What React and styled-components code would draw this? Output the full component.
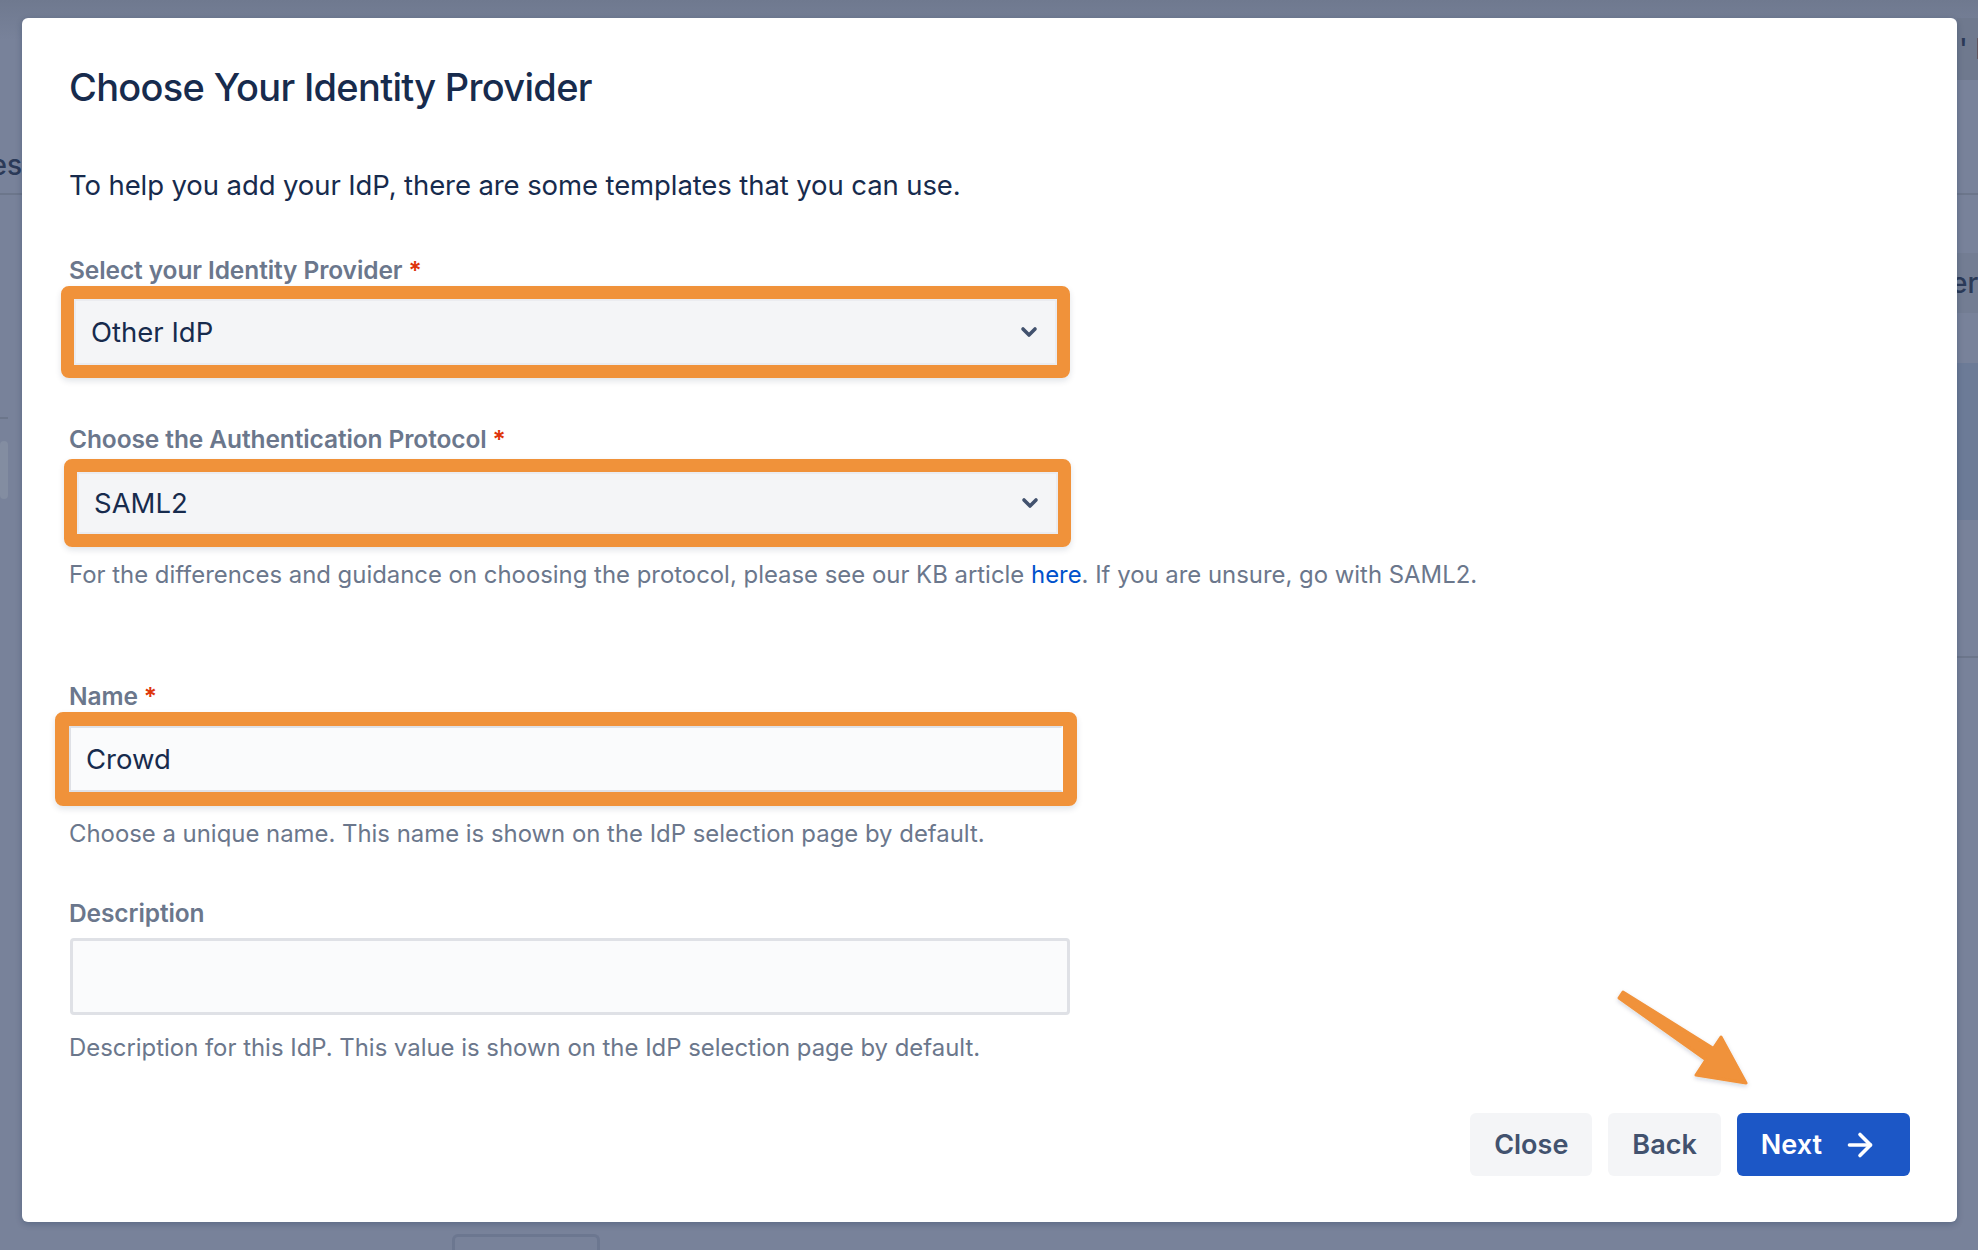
import React from 'react';
import styled, { createGlobalStyle } from 'styled-components';
import { ArrowRight } from 'lucide-react';

const GlobalStyle = createGlobalStyle`
  html, body {
    margin: 0;
    padding: 0;
    background: #78829a;
    font-family: Inter, "Noto Sans", "Liberation Sans", sans-serif;
  }
  * { box-sizing: border-box; }
`;

const Page = styled.div`
  width: 1978px;
  height: 1250px;
  overflow: hidden;
  background: linear-gradient(#6f798f 0, #78829a 40px, #78829a 100%);
  display: flex;
  flex-direction: column;
  padding-top: 18px;
`;

const MiddleRow = styled.div`
  display: flex;
  height: 1204px;
`;

const SideStrip = styled.div`
  width: ${(p) => p.$width}px;
  flex-shrink: 0;
  display: flex;
  flex-direction: column;
  overflow: hidden;
`;

const GhostBlock = styled.div`
  height: ${(p) => p.$h}px;
  margin-top: ${(p) => p.$mt || 0}px;
  background: ${(p) => p.$bg || 'transparent'};
  border-bottom: ${(p) => (p.$line ? '2px solid #6c768b' : 'none')};
  border-radius: ${(p) => p.$radius || 0}px;
  width: ${(p) => p.$w || '100%'};
  color: #2b3a58;
  font-size: 28px;
  line-height: 36px;
  font-weight: 500;
  white-space: nowrap;
  display: flex;
  align-items: ${(p) => (p.$bottom ? 'flex-end' : 'center')};
  justify-content: ${(p) => (p.$end ? 'flex-end' : 'flex-start')};
  padding-left: ${(p) => p.$pl || 0}px;
  padding-bottom: ${(p) => p.$pb || 0}px;
  text-indent: ${(p) => p.$indent || 0}px;
  flex-shrink: 0;
`;

const BottomStrip = styled.div`
  height: 28px;
  display: flex;
  align-items: flex-end;
  padding-left: 452px;
`;

const GhostButton = styled.div`
  width: 148px;
  height: 16px;
  border: 3px solid #6c7790;
  border-bottom: none;
  border-radius: 6px 6px 0 0;
`;

const Modal = styled.div`
  position: relative;
  width: 1935px;
  flex-shrink: 0;
  background: #ffffff;
  border-radius: 6px;
  box-shadow: 0 2px 6px rgba(9, 30, 66, 0.25);
  padding: 45px 47px 46px 47px;
  display: flex;
  flex-direction: column;
`;

const Title = styled.h1`
  margin: 0;
  font-size: 38px;
  line-height: 48px;
  font-weight: 500;
  letter-spacing: -0.7px;
  color: #172b4d;
`;

const Intro = styled.p`
  margin: 54px 0 0 0;
  font-size: 27.5px;
  line-height: 40px;
  color: #172b4d;
  letter-spacing: -0.1px;
`;

const Label = styled.div`
  margin-top: ${(p) => p.$mt}px;
  font-size: 24.5px;
  line-height: 32px;
  font-weight: 600;
  color: #6b778c;
  letter-spacing: -0.1px;
`;

const Required = styled.span`
  color: #de350b;
  margin-left: 6px;
`;

const Highlight = styled.div`
  margin-left: ${(p) => p.$ml}px;
  width: ${(p) => p.$w}px;
  margin-top: ${(p) => p.$mt || 0}px;
  border: ${(p) => p.$bw}px solid #f0923a;
  border-radius: 8px;
  box-shadow: 0 3px 6px rgba(9, 30, 66, 0.12);
`;

const FieldBox = styled.div`
  height: ${(p) => p.$h}px;
  background: ${(p) => (p.$select ? '#f4f5f7' : '#fafbfc')};
  border: 2px solid ${(p) => (p.$select ? '#ebecf0' : '#dfe1e6')};
  border-right-color: ${(p) => (p.$select ? '#ebecf0' : 'transparent')};
  display: flex;
  align-items: center;
  justify-content: space-between;
  padding: 0 17px 0 ${(p) => p.$pl}px;
  font-size: 27.5px;
  color: #172b4d;
`;

const Chevron = styled.svg`
  width: 18px;
  height: 12px;
  color: #42526e;
`;

const Help = styled.div`
  margin-top: ${(p) => p.$mt}px;
  font-size: 23.9px;
  line-height: 36px;
  color: #6b778c;
`;

const Link = styled.a`
  color: #0052cc;
  text-decoration: none;
`;

const TextArea = styled.div`
  margin-top: 9px;
  margin-left: 1px;
  width: 1000px;
  height: 78px;
  border: 3px solid #dfe1e6;
  border-radius: 4px;
  background: #fafbfc;
`;

const Footer = styled.div`
  margin-top: 47px;
  display: flex;
  justify-content: flex-end;
  gap: 16px;
`;

const Button = styled.button`
  height: 63px;
  padding: 0 ${(p) => (p.$primary ? 32 : 24)}px 0 24px;
  border: none;
  border-radius: 6px;
  background: ${(p) => (p.$primary ? '#1c57c6' : '#f4f5f7')};
  color: ${(p) => (p.$primary ? '#ffffff' : '#42526e')};
  font-family: inherit;
  font-size: 27px;
  font-weight: 600;
  display: flex;
  align-items: center;
  gap: 20px;
  cursor: pointer;
`;

const Pointer = styled.svg`
  position: absolute;
  left: 1578px;
  top: 962px;
  width: 160px;
  height: 120px;
  overflow: visible;
`;

const DownChevron = () => (
  <Chevron viewBox="0 0 18 12" fill="none">
    <path
      d="M3 3 L9 9 L15 3"
      stroke="currentColor"
      strokeWidth="3.6"
      strokeLinecap="round"
      strokeLinejoin="round"
    />
  </Chevron>
);

const App = () => {
  return (
    <Page>
      <GlobalStyle />
      <MiddleRow>
        <SideStrip $width={22}>
          <GhostBlock $h={177} $line $end $bottom $pb={10}>
            es
          </GhostBlock>
          <GhostBlock $h={2} $mt={222} $bg="#6c768b" $w="8px" />
          <GhostBlock $h={58} $mt={22} $bg="#838da1" $w="8px" $radius={4} />
        </SideStrip>
        <Modal>
          <Title>Choose Your Identity Provider</Title>
          <Intro>To help you add your IdP, there are some templates that you can use.</Intro>

          <Label $mt={49}>
            Select your Identity Provider<Required>*</Required>
          </Label>
          <Highlight $ml={-8} $w={1009} $bw={13}>
            <FieldBox $h={66} $pl={15} $select>
              <span>Other IdP</span>
              <DownChevron />
            </FieldBox>
          </Highlight>

          <Label $mt={45}>
            Choose the Authentication Protocol<Required>*</Required>
          </Label>
          <Highlight $ml={-5} $w={1007} $bw={13} $mt={4}>
            <FieldBox $h={62} $pl={15} $select>
              <span>SAML2</span>
              <DownChevron />
            </FieldBox>
          </Highlight>
          <Help $mt={10}>
            For the differences and guidance on choosing the protocol, please see our KB article{' '}
            <Link href="#">here</Link>. If you are unsure, go with SAML2.
          </Help>

          <Label $mt={87}>
            Name<Required>*</Required>
          </Label>
          <Highlight $ml={-14} $w={1022} $bw={14}>
            <FieldBox $h={66} $pl={15}>
              <span>Crowd</span>
            </FieldBox>
          </Highlight>
          <Help $mt={10}>Choose a unique name. This name is shown on the IdP selection page by default.</Help>

          <Label $mt={45}>Description</Label>
          <TextArea />
          <Help $mt={15}>Description for this IdP. This value is shown on the IdP selection page by default.</Help>

          <Footer>
            <Button type="button">Close</Button>
            <Button type="button">Back</Button>
            <Button type="button" $primary>
              Next
              <ArrowRight size={36} strokeWidth={2.4} />
            </Button>
          </Footer>

          <Pointer viewBox="0 0 160 120">
            <defs>
              <filter id="arrowShadow" x="-20%" y="-20%" width="140%" height="140%">
                <feDropShadow dx="0" dy="2" stdDeviation="2" floodColor="#091e42" floodOpacity="0.18" />
              </filter>
            </defs>
            <polygon
              points="23,12 113.5,68.4 121,57 146,103 96,95 106,79.8 19,18"
              fill="#f0923a"
              stroke="#f0923a"
              strokeWidth="3"
              strokeLinejoin="round"
              filter="url(#arrowShadow)"
            />
          </Pointer>
        </Modal>
        <SideStrip $width={21}>
          <GhostBlock $h={62} $bg="#6f798e" $pl={2}>
            ' I
          </GhostBlock>
          <GhostBlock $h={2} $mt={113} $bg="#6c768b" />
          <GhostBlock $h={60} $mt={58} $bg="#737d93" $indent={-6}>
            er
          </GhostBlock>
          <GhostBlock $h={157} $mt={50} $bg="#6c7b97" />
          <GhostBlock $h={2} $mt={136} $bg="#6c768b" />
        </SideStrip>
      </MiddleRow>
      <BottomStrip>
        <GhostButton />
      </BottomStrip>
    </Page>
  );
};

export default App;
